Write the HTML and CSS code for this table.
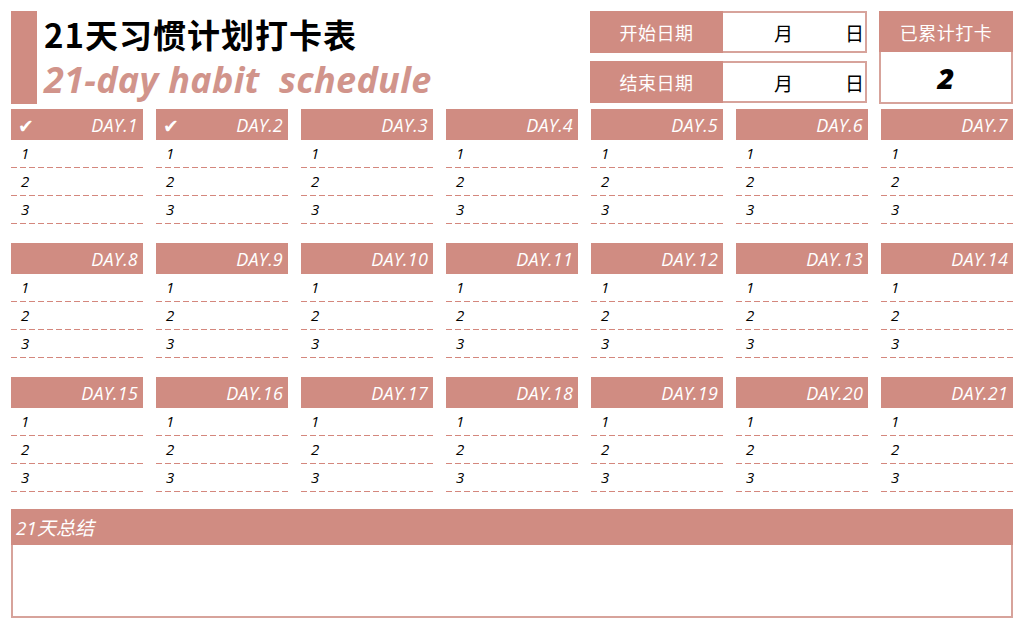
FILE: index.html
```html
<!DOCTYPE html>
<html lang="zh">
<head>
<meta charset="utf-8">
<title>21天习惯计划打卡表</title>
<link rel="stylesheet" href="styles.css">
</head>
<body>
<div class="page">
  <header class="top">
    <div class="accent"></div>
    <div class="titles">
      <h1 class="title">21天习惯计划打卡表</h1>
      <div class="subtitle">21-day habit  schedule</div>
    </div>
    <div class="dates">
      <div class="date-row">
        <div class="date-label">开始日期</div>
        <div class="date-value"><span class="m">月</span><span class="d">日</span></div>
      </div>
      <div class="date-row">
        <div class="date-label">结束日期</div>
        <div class="date-value"><span class="m">月</span><span class="d">日</span></div>
      </div>
    </div>
    <div class="counter">
      <div class="counter-head">已累计打卡</div>
      <div class="counter-body">2</div>
    </div>
  </header>

  <main class="grid" id="grid"></main>

  <section class="summary">
    <div class="summary-head">21天总结</div>
    <div class="summary-body"></div>
  </section>
</div>
<script>
  var grid = document.getElementById('grid');
  var html = '';
  for (var i = 1; i <= 21; i++) {
    var done = i <= 2;
    html += '<div class="day">' +
      '<div class="day-head">' + (done ? '<span class="check">✔</span>' : '<span></span>') +
      '<span class="day-name">DAY.' + i + '</span></div>' +
      '<div class="row"><span>1</span></div>' +
      '<div class="row"><span>2</span></div>' +
      '<div class="row"><span>3</span></div>' +
      '</div>';
  }
  grid.innerHTML = html;
</script>
</body>
</html>
```

FILE: styles.css
```css
* { box-sizing: border-box; }
html, body { margin: 0; padding: 0; background: #fff; }
body {
  font-family: "Open Sans", "Noto Sans CJK SC", sans-serif;
  color: #000;
}
.page {
  width: 1024px;
  padding: 11px 11px 0 11px;
}
.top {
  display: flex;
  height: 93px;
}
.accent {
  width: 26px;
  background: #d08c82;
}
.titles {
  flex: 1;
  padding-left: 7px;
}
.title {
  margin: 0;
  font-family: "Noto Sans CJK SC", sans-serif;
  font-weight: 700;
  font-size: 33px;
  line-height: 47px;
  height: 47px;
  letter-spacing: 1px;
}
.subtitle {
  font-family: "Open Sans", sans-serif;
  font-weight: 700;
  font-style: italic;
  font-size: 36px;
  line-height: 44px;
  height: 44px;
  color: #d1948b;
  white-space: pre;
  letter-spacing: 0.3px;
}
.dates {
  width: 277px;
  display: flex;
  flex-direction: column;
  gap: 8px;
}
.date-row {
  display: flex;
  height: 42px;
}
.date-label {
  width: 133px;
  background: #d08c82;
  color: #fff;
  font-family: "Noto Sans CJK SC", sans-serif;
  font-size: 18px;
  letter-spacing: 0.5px;
  display: flex;
  align-items: center;
  justify-content: center;
}
.date-value {
  flex: 1;
  border: 2px solid #d7a39b;
  border-left: none;
  font-family: "Noto Sans CJK SC", sans-serif;
  font-size: 19px;
  display: flex;
  align-items: center;
}
.date-value .m { margin-left: 51px; }
.date-value .d { margin-left: 52px; }
.counter {
  width: 134px;
  margin-left: 12px;
  display: flex;
  flex-direction: column;
}
.counter-head {
  height: 41px;
  background: #d08c82;
  color: #fff;
  font-family: "Noto Sans CJK SC", sans-serif;
  font-size: 18px;
  letter-spacing: 0.5px;
  display: flex;
  align-items: center;
  justify-content: center;
}
.counter-body {
  flex: 1;
  border: 2px solid #d7a39b;
  border-top: none;
  display: flex;
  align-items: center;
  justify-content: center;
  font-family: "Open Sans", sans-serif;
  font-weight: 800;
  font-style: italic;
  font-size: 29px;
}
.grid {
  margin-top: 5px;
  display: grid;
  grid-template-columns: repeat(7, 132px);
  column-gap: 13px;
  row-gap: 19px;
}
.day-head {
  height: 31px;
  background: #d08c82;
  color: #fff;
  display: flex;
  align-items: center;
  justify-content: space-between;
  padding: 0 5px 0 7px;
}
.check {
  font-family: "DejaVu Sans", sans-serif;
  font-size: 19px;
  line-height: 1;
  margin-top: 3px;
}
.day-name {
  font-family: "Open Sans", sans-serif;
  font-style: italic;
  font-size: 18px;
  font-weight: 400;
  letter-spacing: 0.2px;
}
.row {
  height: 28px;
  padding: 3px 0 0 10px;
  font-family: "Open Sans", sans-serif;
  font-style: italic;
  font-size: 15px;
  line-height: 20px;
  background-image: repeating-linear-gradient(to right, #d4877d 0, #d4877d 6px, #ffffff 6px, #ffffff 9px);
  background-size: 100% 1px;
  background-position: left bottom;
  background-repeat: no-repeat;
}
.summary {
  margin-top: 17px;
  height: 109px;
  display: flex;
  flex-direction: column;
}
.summary-head {
  height: 36px;
  background: #d08c82;
  color: #fff;
  font-family: "Open Sans", "Noto Sans CJK SC", sans-serif;
  font-style: italic;
  font-size: 19px;
  display: flex;
  align-items: center;
  padding-left: 5px;
}
.summary-body {
  flex: 1;
  border: 2px solid #d7a39b;
  border-top: none;
}
```
